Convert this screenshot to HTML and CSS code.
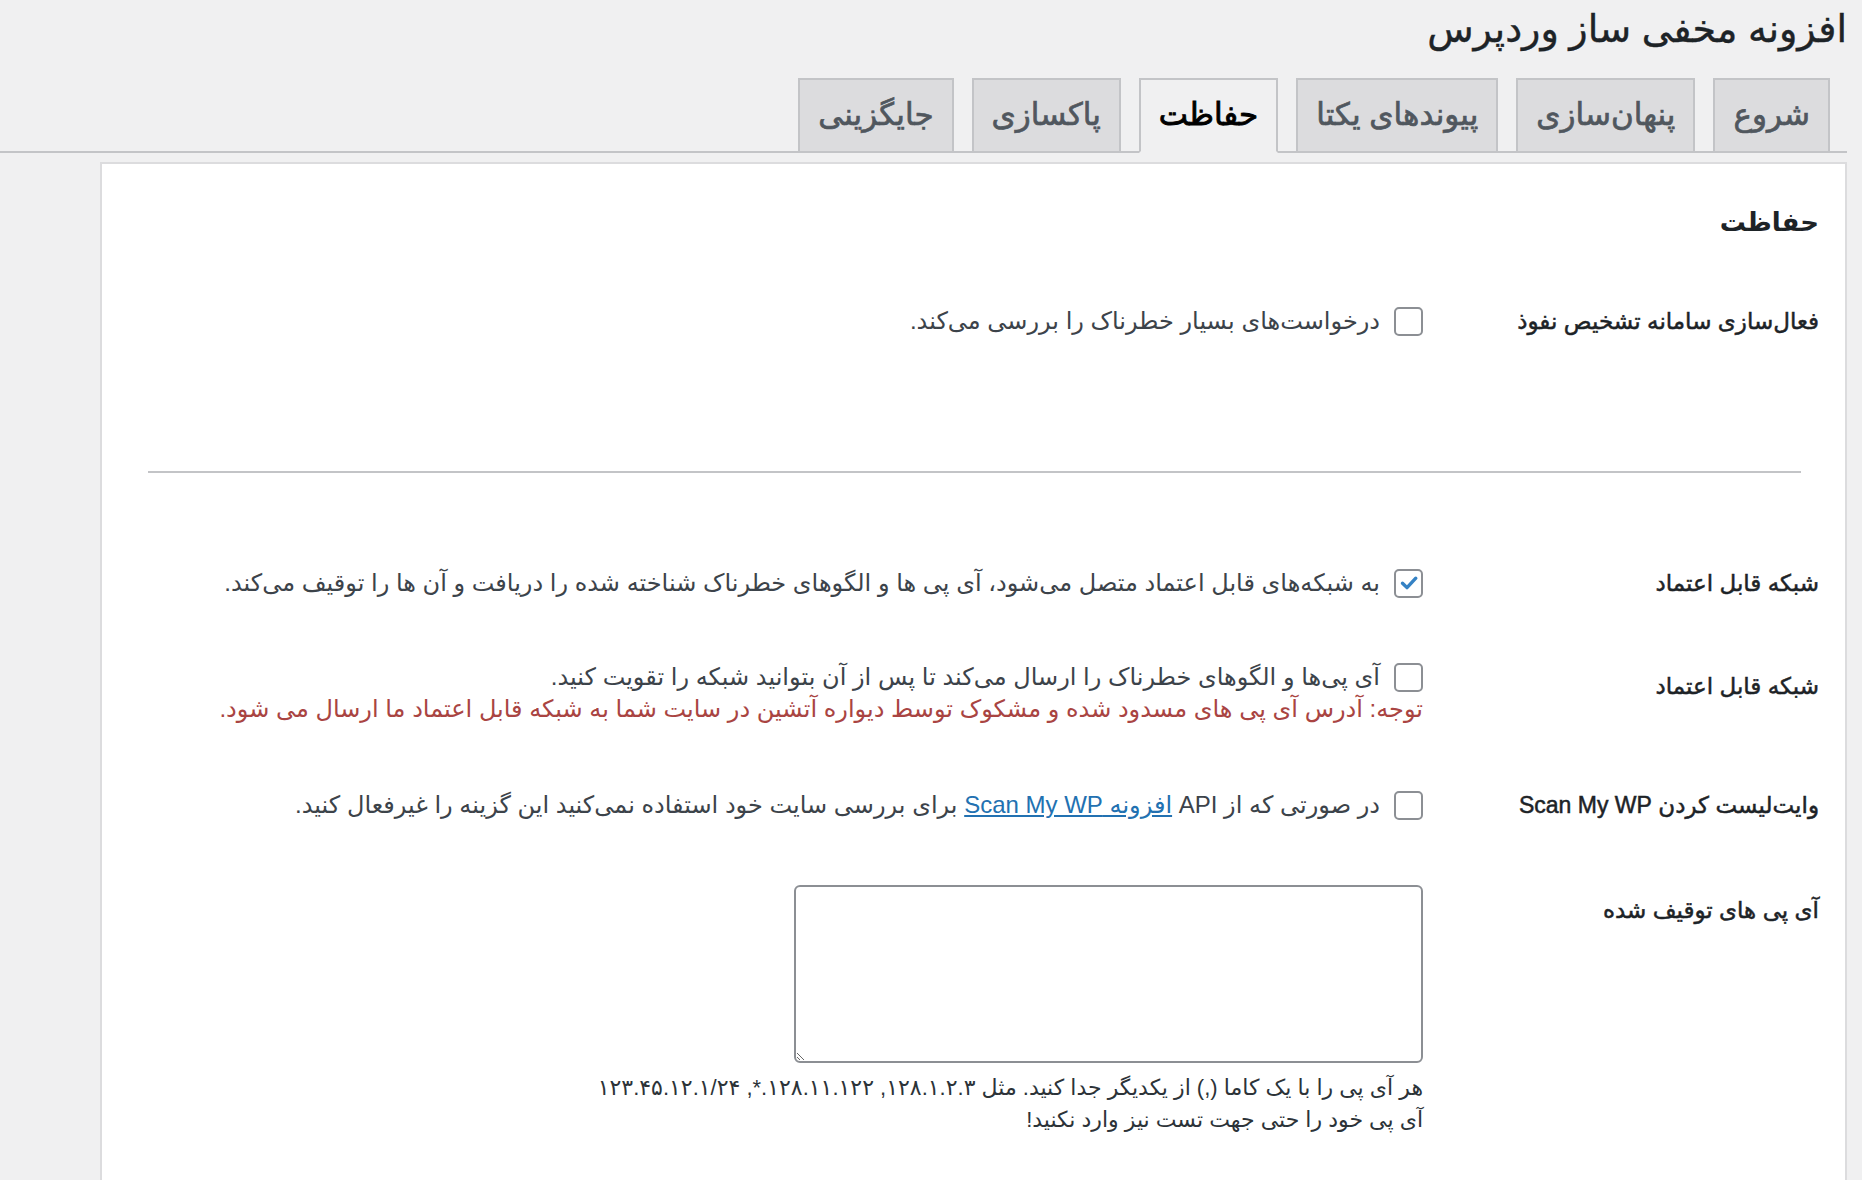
FILE: index.html
```html
<!DOCTYPE html>
<html lang="fa" dir="rtl">
<head>
<meta charset="utf-8">
<title>افزونه مخفی ساز وردپرس</title>
<link rel="stylesheet" href="styles.css">
</head>
<body>
<div class="wrap">
  <h1 class="page-title">افزونه مخفی ساز وردپرس</h1>
  <nav class="tabs">
    <a class="tab">شروع</a>
    <a class="tab">پنهان‌سازی</a>
    <a class="tab">پیوندهای یکتا</a>
    <a class="tab tab-active">حفاظت</a>
    <a class="tab">پاکسازی</a>
    <a class="tab">جایگزینی</a>
  </nav>
  <div class="card">
    <h2 class="section-title">حفاظت</h2>

    <div class="row row-1">
      <div class="label">فعال‌سازی سامانه تشخیص نفوذ</div>
      <div class="control">
        <label class="check-line"><span class="checkbox"></span><span>درخواست‌های بسیار خطرناک را بررسی می‌کند.</span></label>
      </div>
    </div>

    <hr class="divider">

    <div class="row row-2">
      <div class="label">شبکه قابل اعتماد</div>
      <div class="control">
        <label class="check-line"><span class="checkbox checked"><svg viewBox="0 0 20 20" width="20" height="20"><path d="M3.5 10.2 L8 14.6 L16.8 5.2" fill="none" stroke="#3582c4" stroke-width="3.4" stroke-linecap="round" stroke-linejoin="round"/></svg></span><span>به شبکه‌های قابل اعتماد متصل می‌شود، آی پی ها و الگوهای خطرناک شناخته شده را دریافت و آن ها را توقیف می‌کند.</span></label>
      </div>
    </div>

    <div class="row row-3">
      <div class="label label-low">شبکه قابل اعتماد</div>
      <div class="control">
        <label class="check-line"><span class="checkbox"></span><span>آی پی‌ها و الگوهای خطرناک را ارسال می‌کند تا پس از آن بتوانید شبکه را تقویت کنید.</span></label>
        <div class="note">توجه: آدرس آی پی های مسدود شده و مشکوک توسط دیواره آتشین در سایت شما به شبکه قابل اعتماد ما ارسال می شود.</div>
      </div>
    </div>

    <div class="row row-4">
      <div class="label">وایت‌لیست کردن Scan My WP</div>
      <div class="control">
        <label class="check-line"><span class="checkbox"></span><span>در صورتی که از API <a class="link" href="#">افزونه Scan My WP</a> برای بررسی سایت خود استفاده نمی‌کنید این گزینه را غیرفعال کنید.</span></label>
      </div>
    </div>

    <div class="row row-5">
      <div class="label label-low">آی پی های توقیف شده</div>
      <div class="control">
        <textarea class="ip-box"></textarea>
        <p class="description">هر آی پی را با یک کاما (,) از یکدیگر جدا کنید. مثل ۱۲۸.۱.۲.۳, ۱۲۸.۱۱.۱۲۲.*, ۱۲۳.۴۵.۱۲.۱/۲۴<br>آی پی خود را حتی جهت تست نیز وارد نکنید!</p>
      </div>
    </div>
  </div>
</div>
</body>
</html>
```

FILE: styles.css
```css
* { box-sizing: border-box; }

html, body {
  margin: 0;
  padding: 0;
  background: #f0f0f1;
  height: 1180px;
  overflow: hidden;
}

body {
  font-family: "Liberation Sans", "DejaVu Sans", sans-serif;
  color: #3c434a;
  font-size: 24px;
  line-height: 32px;
}

.wrap {
  margin-right: 15px;
}

.page-title {
  margin: 0;
  padding: 0;
  height: 78px;
  line-height: 58px;
  font-size: 38px;
  font-weight: 400;
  color: #1d2327;
  -webkit-text-stroke: 0.4px #1d2327;
}

.tabs {
  display: flex;
  align-items: flex-end;
  gap: 18px;
  padding-right: 17px;
  border-bottom: 2px solid #c3c4c7;
  height: 75px;
}

.tab {
  display: block;
  height: 75px;
  margin-bottom: -2px;
  padding: 0 18px;
  line-height: 70px;
  font-size: 31px;
  font-weight: 400;
  color: #50575e;
  -webkit-text-stroke: 0.7px #50575e;
  background: #dcdcde;
  border: 2px solid #c3c4c7;
  white-space: nowrap;
}

.tab-active {
  background: #f0f0f1;
  color: #000;
  -webkit-text-stroke: 0.9px #000;
  border-bottom-color: #f0f0f1;
}

.card {
  margin: 9px 0 0 100px;
  background: #fff;
  border: 2px solid #dcdcde;
  border-bottom: none;
  padding: 38px 26px 0 0;
  height: 1020px;
}

.section-title {
  margin: 0;
  font-size: 26px;
  line-height: 40px;
  font-weight: 700;
  color: #1d2327;
}

.row {
  display: grid;
  grid-template-columns: 396px 1fr;
  align-items: start;
}

.label {
  font-size: 23px;
  line-height: 32px;
  font-weight: 400;
  color: #1d2327;
  -webkit-text-stroke: 0.5px #1d2327;
}

.label-low { padding-top: 9px; }

.row-1 { margin-top: 63px; }
.row-2 { margin-top: 94px; }
.row-3 { margin-top: 62px; }
.row-4 { margin-top: 64px; }
.row-5 { margin-top: 64px; }

.divider {
  margin: 134px 18px 0 46px;
  border: none;
  border-top: 2px solid #c3c4c7;
  height: 0;
}

.check-line {
  display: flex;
  align-items: center;
  gap: 14px;
  white-space: nowrap;
}

.checkbox {
  flex: none;
  width: 29px;
  height: 29px;
  border: 2px solid #8c8f94;
  border-radius: 5px;
  background: #fff;
  display: flex;
  align-items: center;
  justify-content: center;
}

.note {
  color: #a94442;
  white-space: nowrap;
}

.link {
  color: #2271b1;
  text-decoration: underline;
}

.ip-box {
  display: block;
  width: 629px;
  height: 178px;
  margin: 0;
  border: 2px solid #8c8f94;
  border-radius: 6px;
  background: #fff;
  font: inherit;
}

.description {
  margin: 9px 0 0;
  font-size: 22px;
  line-height: 32px;
  color: #2c3338;
}
```
